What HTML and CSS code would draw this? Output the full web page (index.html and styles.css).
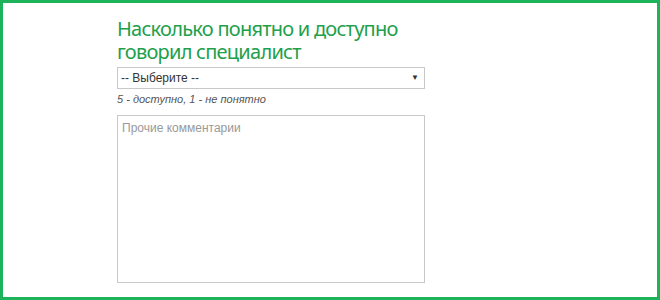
FILE: index.html
```html
<!DOCTYPE html>
<html lang="ru">
<head>
    <meta charset="UTF-8">
    <meta name="viewport" content="width=device-width, initial-scale=1.0">
    <title>Опрос</title>
    <link rel="stylesheet" href="styles.css">
</head>
<body>
    <div class="frame">
        <form class="survey">
            <h2 class="question">Насколько понятно и доступно говорил специалист</h2>
            <div class="select-wrap">
                <select class="rating">
                    <option>-- Выберите --</option>
                    <option>5</option>
                    <option>4</option>
                    <option>3</option>
                    <option>2</option>
                    <option>1</option>
                </select>
                <span class="arrow">&#9660;</span>
            </div>
            <div class="hint">5 - доступно, 1 - не понятно</div>
            <textarea class="comments" placeholder="Прочие комментарии"></textarea>
        </form>
    </div>
</body>
</html>
```

FILE: styles.css
```css
html, body {
    margin: 0;
    padding: 0;
    background: #fff;
}
.frame {
    box-sizing: border-box;
    width: 660px;
    height: 300px;
    border: 3px solid #1db35b;
    padding: 14px 0 0 114px;
    font-family: "Liberation Sans", Arial, sans-serif;
}
.survey {
    width: 308px;
}
.question {
    margin: 0 0 4px;
    font-family: "Noto Sans", "Open Sans", sans-serif;
    font-weight: normal;
    font-size: 20px;
    line-height: 23px;
    color: #21a04b;
    letter-spacing: -0.75px;
    width: 300px;
}
.select-wrap {
    position: relative;
}
.rating {
    display: block;
    box-sizing: border-box;
    width: 308px;
    height: 22px;
    margin: 0;
    padding: 0 0 0 3px;
    border: 1px solid #c8c8c8;
    border-radius: 0;
    background: #fff;
    font-family: "Liberation Sans", Arial, sans-serif;
    font-size: 12px;
    color: #333;
    -webkit-appearance: none;
    appearance: none;
}
.arrow {
    position: absolute;
    right: 6px;
    top: 6px;
    font-size: 8px;
    color: #333;
    pointer-events: none;
}
.hint {
    margin: 3px 0 9px;
    font-size: 11px;
    font-style: italic;
    color: #555;
    line-height: 14px;
}
.comments {
    display: block;
    box-sizing: border-box;
    width: 308px;
    height: 168px;
    margin: 0;
    padding: 5px 4px;
    border: 1px solid #c8c8c8;
    resize: none;
    font-family: "Liberation Sans", Arial, sans-serif;
    font-size: 12px;
    color: #333;
}
.comments::placeholder {
    color: #999;
}
```
